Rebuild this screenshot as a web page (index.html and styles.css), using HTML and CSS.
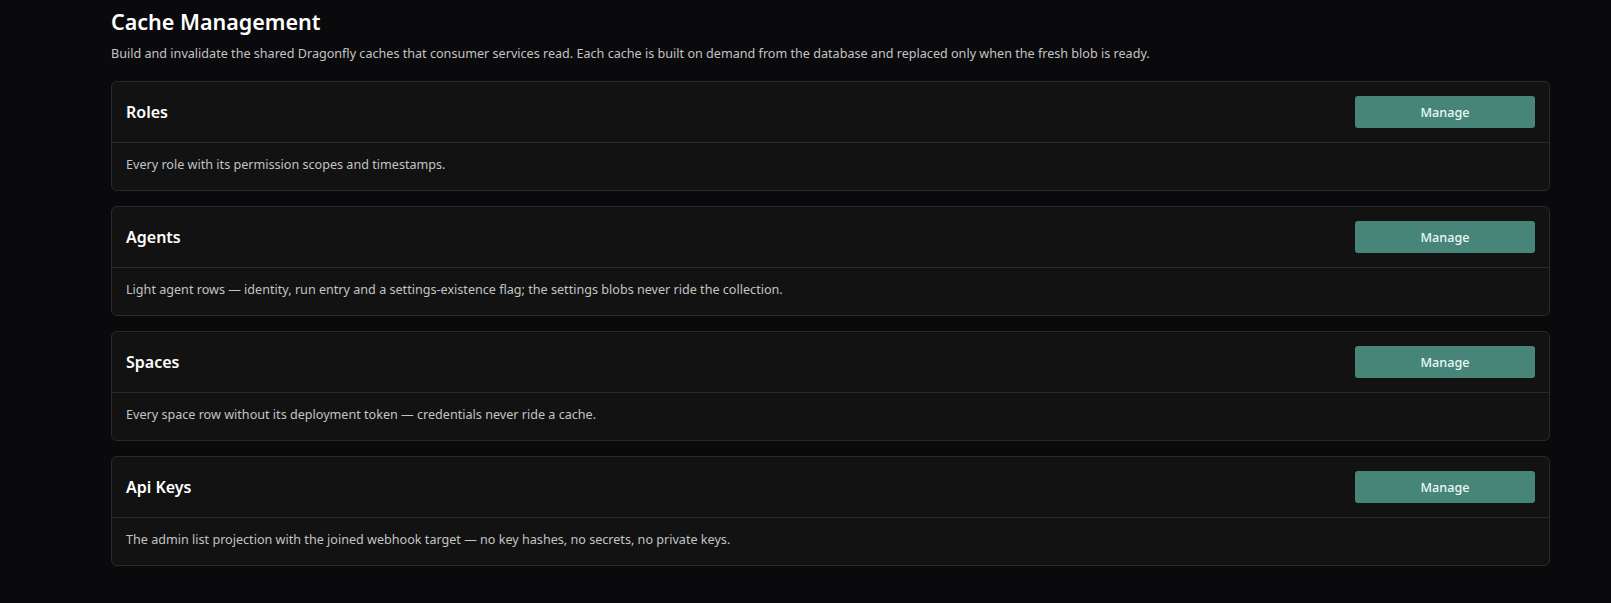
FILE: index.html
```html
<!DOCTYPE html>
<html lang="en">
<head>
  <meta charset="UTF-8" />
  <meta name="viewport" content="width=device-width, initial-scale=1.0"/>
  <title>Cache Management</title>
  <link rel="stylesheet" href="styles.css">
</head>
<body>

  <main class="page">
    <h1>Cache Management</h1>
    <p class="lead">Build and invalidate the shared Dragonfly caches that consumer services read. Each cache is built on demand from the database and replaced only when the fresh blob is ready.</p>

    <div class="cache-list">
      <div class="cache-card">
        <div class="cache-head">
          <h2>Roles</h2>
          <button class="btn">Manage</button>
        </div>
        <p class="cache-desc">Every role with its permission scopes and timestamps.</p>
      </div>
      <div class="cache-card">
        <div class="cache-head">
          <h2>Agents</h2>
          <button class="btn">Manage</button>
        </div>
        <p class="cache-desc">Light agent rows — identity, run entry and a settings-existence flag; the settings blobs never ride the collection.</p>
      </div>
      <div class="cache-card">
        <div class="cache-head">
          <h2>Spaces</h2>
          <button class="btn">Manage</button>
        </div>
        <p class="cache-desc">Every space row without its deployment token — credentials never ride a cache.</p>
      </div>
      <div class="cache-card">
        <div class="cache-head">
          <h2>Api Keys</h2>
          <button class="btn">Manage</button>
        </div>
        <p class="cache-desc">The admin list projection with the joined webhook target — no key hashes, no secrets, no private keys.</p>
      </div>
    </div>
  </main>

</body>
</html>
```

FILE: styles.css
```css
* {
  box-sizing: border-box;
  margin: 0;
  padding: 0;
}

body {
  font-family: 'Noto Sans', 'Open Sans', sans-serif;
  background: #0a0a0c;
  color: #e8e8e8;
}

.page {
  width: 1439px;
  margin-left: 111px;
  padding-top: 7px;
}

h1 {
  font-size: 21.5px;
  font-weight: 600;
  line-height: 30px;
  color: #fff;
}

.lead {
  margin-top: 8px;
  font-size: 12.6px;
  line-height: 18px;
  color: #c4c4c4;
}

.cache-list {
  display: flex;
  flex-direction: column;
  gap: 15px;
  margin-top: 18px;
}

.cache-card {
  background: #121212;
  border: 1px solid #2a2a2a;
  border-radius: 6px;
}

.cache-head {
  display: flex;
  align-items: center;
  justify-content: space-between;
  padding: 14px 14px 14px 14px;
  border-bottom: 1px solid #2a2a2a;
}

.cache-head h2 {
  font-size: 16px;
  font-weight: 600;
  line-height: 20px;
  color: #fff;
}

.btn {
  width: 180px;
  height: 32px;
  border: none;
  border-radius: 3px;
  background: #478579;
  color: #eafaf5;
  font-family: inherit;
  font-size: 12.6px;
  font-weight: 500;
  cursor: pointer;
}

.btn:hover {
  background: #51968a;
}

.cache-desc {
  padding: 13px 14px 16px 14px;
  font-size: 12.6px;
  line-height: 18px;
  color: #c4c4c4;
}
```
